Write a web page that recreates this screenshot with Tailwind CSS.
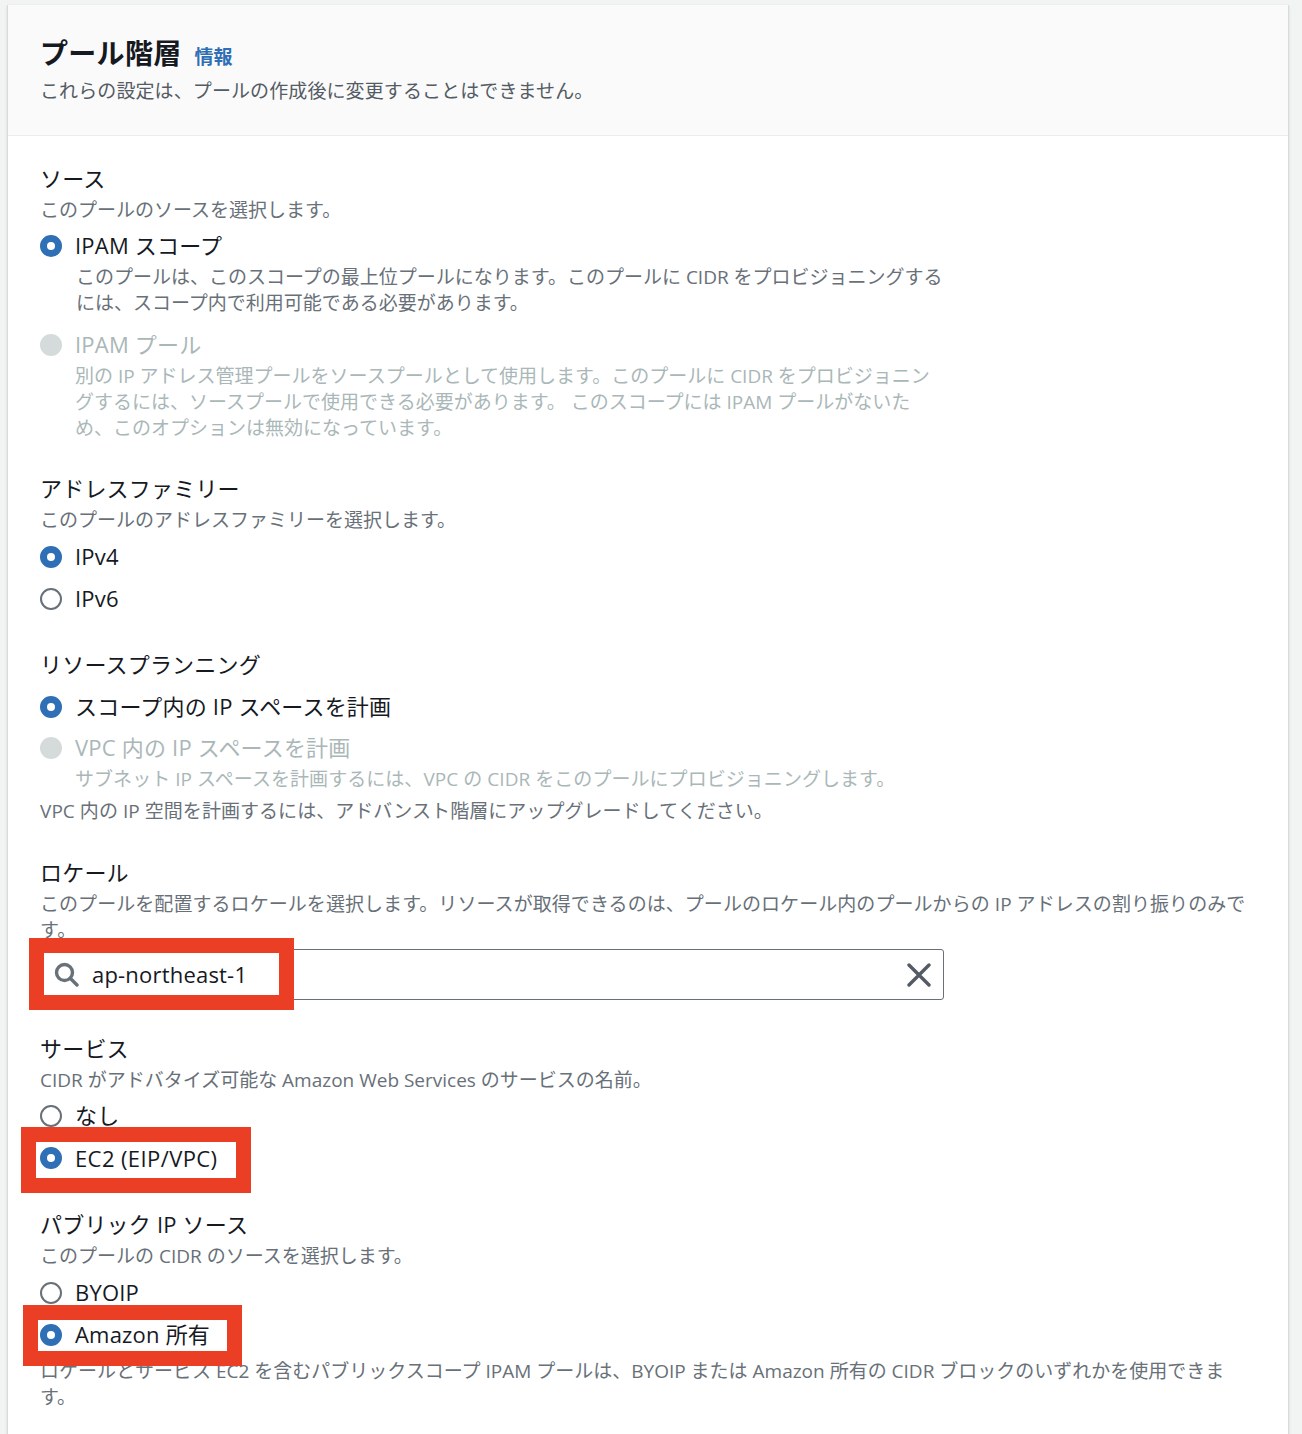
<!DOCTYPE html>
<html lang="ja">
<head>
    <meta charset="UTF-8">
    <meta name="viewport" content="width=device-width, initial-scale=1.0">
    <title>プール階層</title>
    <script src="https://cdn.jsdelivr.net/npm/@tailwindcss/browser@4"></script>
</head>
<body class="bg-[#f2f3f3] font-['Open_Sans','Noto_Sans_CJK_JP',sans-serif] text-[#16191f] overflow-hidden">
<div class="relative h-[1434px] w-[1302px] overflow-hidden pt-[5px] pl-[7px]">

    <div class="w-[1282px] h-[1500px] bg-white border-x border-[#d5dbdb] shadow-sm">

        <!-- header -->
        <div class="h-[131px] bg-[#fafafa] border-b border-[#eaeded] pl-[32px] pt-[28px]">
            <div class="flex items-baseline h-[40px]">
                <h2 class="text-[28px] tracking-[0.3px] leading-[40px] font-bold">プール階層</h2>
                <a class="ml-[13px] text-[19px] text-[#2f6fb5] font-semibold">情報</a>
            </div>
            <p class="mt-[3px] text-[19px] tracking-[0.1px] leading-[30px] text-[#545b64]">これらの設定は、プールの作成後に変更することはできません。</p>
        </div>

        <div class="pl-[32px] pt-[28px]">

            <!-- source -->
            <h3 class="h-[30px] text-[22px] leading-[28px] tracking-[0.2px]">ソース</h3>
            <p class="h-[30px] text-[19px] leading-[32px] text-[#687078]">このプールのソースを選択します。</p>
            <div class="mt-[7px] flex items-center h-[30px] gap-[13px]">
                <span class="size-[22px] rounded-full border-[7px] border-[#2f6fb5] bg-white"></span>
                <span class="pb-[2px] text-[22px] tracking-[0.2px]">IPAM スコープ</span>
            </div>
            <p class="mt-[3px] ml-[36px] text-[19px] leading-[26px] text-[#687078]">このプールは、このスコープの最上位プールになります。このプールに CIDR をプロビジョニングする<br>には、スコープ内で利用可能である必要があります。</p>
            <div class="mt-[14px] flex items-center h-[30px] gap-[13px]">
                <span class="size-[22px] rounded-full bg-[#d5dbdb]"></span>
                <span class="pb-[2px] text-[22px] tracking-[0.2px] text-[#aab7b8]">IPAM プール</span>
            </div>
            <p class="mt-[3px] ml-[35px] text-[19px] leading-[26px] text-[#aab7b8]">別の IP アドレス管理プールをソースプールとして使用します。このプールに CIDR をプロビジョニン<br>グするには、ソースプールで使用できる必要があります。 このスコープには IPAM プールがないた<br>め、このオプションは無効になっています。</p>

            <!-- address family -->
            <h3 class="mt-[33px] h-[30px] text-[22px] leading-[28px] tracking-[0.2px]">アドレスファミリー</h3>
            <p class="h-[30px] text-[19px] leading-[32px] text-[#687078]">このプールのアドレスファミリーを選択します。</p>
            <div class="mt-[8px] flex items-center h-[30px] gap-[13px]">
                <span class="size-[22px] rounded-full border-[7px] border-[#2f6fb5] bg-white"></span>
                <span class="pb-[2px] text-[22px] tracking-[0.2px]">IPv4</span>
            </div>
            <div class="mt-[12px] flex items-center h-[30px] gap-[13px]">
                <span class="size-[22px] rounded-full border-2 border-[#687078] bg-white"></span>
                <span class="pb-[2px] text-[22px] tracking-[0.2px]">IPv6</span>
            </div>

            <!-- resource planning -->
            <h3 class="mt-[36px] h-[30px] text-[22px] leading-[28px] tracking-[0.2px]">リソースプランニング</h3>
            <div class="mt-[12px] flex items-center h-[30px] gap-[13px]">
                <span class="size-[22px] rounded-full border-[7px] border-[#2f6fb5] bg-white"></span>
                <span class="pb-[2px] text-[22px] tracking-[0.2px]">スコープ内の IP スペースを計画</span>
            </div>
            <div class="mt-[11px] flex items-center h-[30px] gap-[13px]">
                <span class="size-[22px] rounded-full bg-[#d5dbdb]"></span>
                <span class="pb-[2px] text-[22px] tracking-[0.2px] text-[#aab7b8]">VPC 内の IP スペースを計画</span>
            </div>
            <p class="mt-[3px] ml-[35px] text-[19px] tracking-[0.05px] leading-[26px] text-[#aab7b8]">サブネット IP スペースを計画するには、VPC の CIDR をこのプールにプロビジョニングします。</p>
            <p class="mt-[6px] text-[19px] tracking-[0.05px] leading-[26px] text-[#687078]">VPC 内の IP 空間を計画するには、アドバンスト階層にアップグレードしてください。</p>

            <!-- locale -->
            <h3 class="mt-[34px] h-[30px] text-[22px] leading-[28px] tracking-[0.2px]">ロケール</h3>
            <p class="mt-[3px] text-[19px] tracking-[0.06px] leading-[26px] text-[#687078]">このプールを配置するロケールを選択します。リソースが取得できるのは、プールのロケール内のプールからの IP アドレスの割り振りのみで<br>す。</p>
            <div class="mt-[6px] w-[904px] h-[51px] flex items-center border border-[#687078] rounded-[3px] pl-[13px] pr-[12px]">
                <svg class="size-[25px]" viewBox="0 0 25 25" fill="none" stroke="#687078" stroke-width="3.4" stroke-linecap="round"><circle cx="10.5" cy="10.5" r="8"/><path d="M16.5 16.5l6.5 6.5"/></svg>
                <span class="ml-[13px] text-[22px] tracking-[0.2px]">ap-northeast-1</span>
                <svg class="ml-auto size-[24px]" viewBox="0 0 24 24" fill="none" stroke="#545b64" stroke-width="3.4" stroke-linecap="round"><path d="M2 2l20 20M22 2L2 22"/></svg>
            </div>

            <!-- service -->
            <h3 class="mt-[34px] h-[30px] text-[22px] leading-[28px] tracking-[0.2px]">サービス</h3>
            <p class="mt-px h-[30px] text-[19px] leading-[30px] text-[#687078]">CIDR がアドバタイズ可能な Amazon Web Services のサービスの名前。</p>
            <div class="mt-[6px] flex items-center h-[30px] gap-[13px]">
                <span class="size-[22px] rounded-full border-2 border-[#687078] bg-white"></span>
                <span class="pb-[2px] text-[22px] tracking-[0.2px]">なし</span>
            </div>
            <div class="mt-[12px] flex items-center h-[30px] gap-[13px]">
                <span class="size-[22px] rounded-full border-[7px] border-[#2f6fb5] bg-white"></span>
                <span class="text-[22px] tracking-[0.4px]">EC2 (EIP/VPC)</span>
            </div>

            <!-- public ip source -->
            <h3 class="mt-[37px] h-[30px] text-[22px] leading-[28px] tracking-[0.2px]">パブリック IP ソース</h3>
            <p class="h-[30px] text-[19px] leading-[32px] text-[#687078]">このプールの CIDR のソースを選択します。</p>
            <div class="mt-[8px] flex items-center h-[30px] gap-[13px]">
                <span class="size-[22px] rounded-full border-2 border-[#687078] bg-white"></span>
                <span class="pb-[2px] text-[22px] tracking-[0.2px]">BYOIP</span>
            </div>
            <div class="mt-[12px] flex items-center h-[30px] gap-[13px]">
                <span class="size-[22px] rounded-full border-[7px] border-[#2f6fb5] bg-white"></span>
                <span class="pb-[2px] text-[22px] tracking-[0.2px]">Amazon 所有</span>
            </div>
            <p class="mt-[8px] text-[19px] leading-[26px] text-[#687078]">ロケールとサービス EC2 を含むパブリックスコープ IPAM プールは、BYOIP または Amazon 所有の CIDR ブロックのいずれかを使用できま<br>す。</p>
        </div>
    </div>

    <!-- red annotation boxes drawn over the screenshot -->
    <div class="absolute left-[29px] top-[938px] w-[265px] h-[72px] border-[15px] border-[#ea3f24]"></div>
    <div class="absolute left-[21px] top-[1127px] w-[230px] h-[66px] border-[15px] border-[#ea3f24]"></div>
    <div class="absolute left-[23px] top-[1305px] w-[219px] h-[61px] border-[15px] border-[#ea3f24]"></div>
</div>
</body>
</html>
